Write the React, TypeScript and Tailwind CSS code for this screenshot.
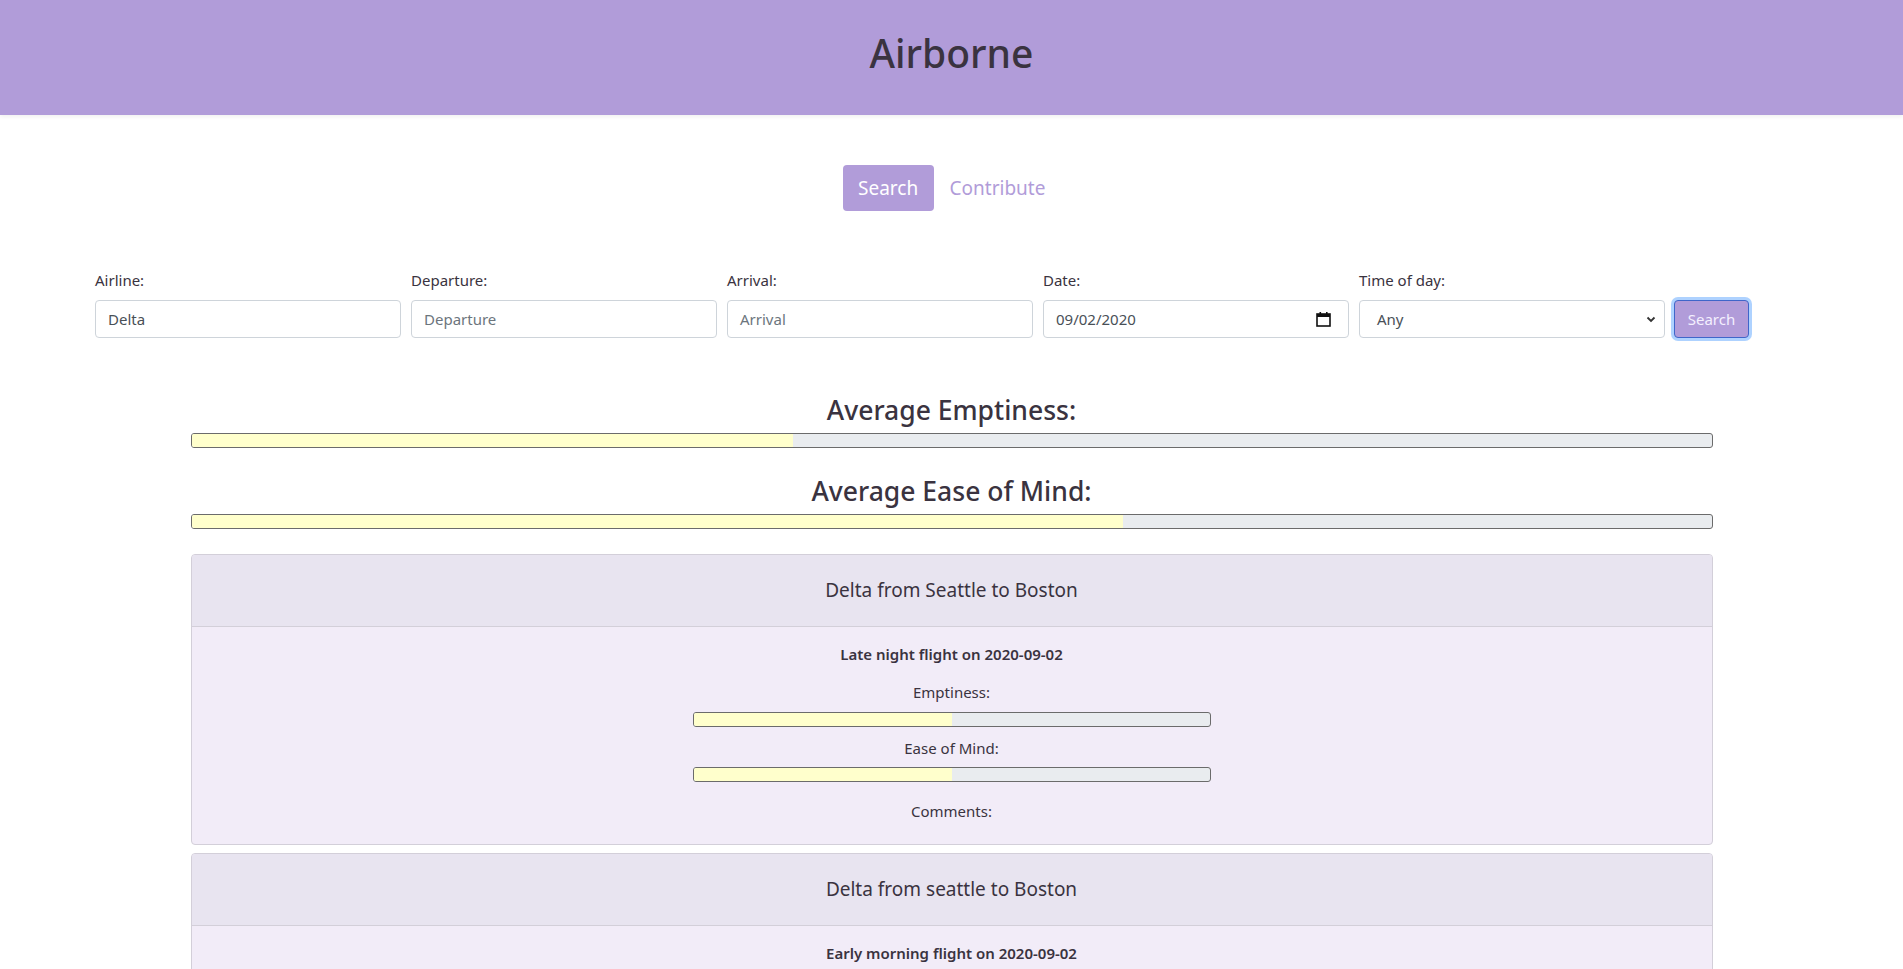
import React from "react";

const font = { fontFamily: '"Noto Sans", "Open Sans", Arial, sans-serif' };

function Bar({ pct, wide }: { pct: number; wide?: boolean }) {
  return (
    <div
      className={
        "h-[15px] rounded-[3px] border border-[#6b6b6b] bg-[#e9ecef] overflow-hidden " +
        (wide ? "w-[1522px]" : "w-[518px]")
      }
    >
      <div className="h-full bg-[#ffffcc]" style={{ width: `${pct}%` }} />
    </div>
  );
}

function Field({ label, children }: { label: string; children: React.ReactNode }) {
  return (
    <div className="w-[306px] flex flex-col">
      <div className="text-[15px] leading-[24px] text-[#3a3340] mb-[8px]">{label}</div>
      {children}
    </div>
  );
}

function TextBox({ value, placeholder }: { value?: string; placeholder?: string }) {
  return (
    <div className="h-[38px] rounded-[4px] border border-[#ced4da] bg-white flex items-center px-[12px] text-[15px]">
      {value ? (
        <span className="text-[#495057]">{value}</span>
      ) : (
        <span className="text-[#6c757d]">{placeholder}</span>
      )}
    </div>
  );
}

function FlightCard({ title, sub, showBody }: { title: string; sub: string; showBody: boolean }) {
  return (
    <div className="w-[1522px] rounded-[4px] border border-[#d3cfd9] overflow-hidden bg-[#f2ecf8]">
      <div className="h-[72px] bg-[#e8e4f0] border-b border-[#d3cfd9] flex items-center justify-center text-[19px] text-[#3a3340]">
        {title}
      </div>
      <div className="flex flex-col items-center text-[#3a3340]">
        <div className="mt-[15px] text-[15px] font-semibold leading-[24px]">{sub}</div>
        {showBody && (
          <>
            <div className="mt-[14px] text-[15px] leading-[24px]">Emptiness:</div>
            <div className="mt-[8px]">
              <Bar pct={50} />
            </div>
            <div className="mt-[9px] text-[15px] leading-[24px]">Ease of Mind:</div>
            <div className="mt-[7px]">
              <Bar pct={50} />
            </div>
            <div className="mt-[17px] text-[15px] leading-[24px]">Comments:</div>
            <div className="h-[21px]" />
          </>
        )}
      </div>
    </div>
  );
}

export default function App() {
  return (
    <div className="min-h-[969px] bg-white" style={font}>
      <div className="h-[115px] bg-[#b19cd9] flex justify-center pt-[29px] shadow-[0_2px_4px_rgba(0,0,0,0.06)]">
        <h1 className="text-[39px] leading-[48px] font-medium text-[#3a3340]">Airborne</h1>
      </div>

      <div className="flex justify-center items-center gap-[9px] mt-[50px] pr-[8px]">
        <div className="h-[46px] w-[91px] rounded-[4px] bg-[#b19cd9] text-white text-[19px] flex items-center justify-center">
          Search
        </div>
        <div className="h-[46px] flex items-center px-[7px] text-[19px] text-[#b19cd9]">Contribute</div>
      </div>

      <div className="flex items-end gap-[10px] pl-[95px] mt-[57px]">
        <Field label="Airline:">
          <TextBox value="Delta" />
        </Field>
        <Field label="Departure:">
          <TextBox placeholder="Departure" />
        </Field>
        <Field label="Arrival:">
          <TextBox placeholder="Arrival" />
        </Field>
        <Field label="Date:">
          <div className="h-[38px] rounded-[4px] border border-[#ced4da] bg-white flex items-center justify-between pl-[12px] pr-[17px] text-[15px] text-[#495057]">
            <span>09/02/2020</span>
            <svg width="15" height="16" viewBox="0 0 15 16">
              <rect x="1" y="3" width="13" height="12" fill="none" stroke="#111" strokeWidth="1.6" />
              <rect x="1" y="3" width="13" height="3" fill="#111" />
              <rect x="3.5" y="1" width="1.6" height="3" fill="#111" />
              <rect x="10" y="1" width="1.6" height="3" fill="#111" />
            </svg>
          </div>
        </Field>
        <Field label="Time of day:">
          <div className="h-[38px] rounded-[4px] border border-[#ced4da] bg-white flex items-center justify-between pl-[17px] pr-[8px] text-[15px] text-[#495057]">
            <span>Any</span>
            <svg width="10" height="7" viewBox="0 0 10 7">
              <path d="M1.5 1.5 L5 5 L8.5 1.5" fill="none" stroke="#333" strokeWidth="1.8" />
            </svg>
          </div>
        </Field>
        <div className="ml-[-1px] h-[38px] w-[75px] rounded-[4px] bg-[#b19cd9] border border-[#3f66c9] shadow-[0_0_0_3px_rgba(120,180,255,0.6)] text-[#f4f0ff] text-[15px] flex items-center justify-center">
          Search
        </div>
      </div>

      <div className="flex flex-col items-center mt-[55px]">
        <h3 className="text-[26.5px] leading-[34px] font-medium text-[#3a3340]">Average Emptiness:</h3>
        <div className="mt-[6px]">
          <Bar pct={39.6} wide />
        </div>
        <h3 className="mt-[26px] text-[26.5px] leading-[34px] font-medium text-[#3a3340]">Average Ease of Mind:</h3>
        <div className="mt-[6px]">
          <Bar pct={61.3} wide />
        </div>

        <div className="mt-[25px] flex flex-col gap-[8px]">
          <FlightCard title="Delta from Seattle to Boston" sub="Late night flight on 2020-09-02" showBody />
          <FlightCard title="Delta from seattle to Boston" sub="Early morning flight on 2020-09-02" showBody />
        </div>
      </div>
    </div>
  );
}
